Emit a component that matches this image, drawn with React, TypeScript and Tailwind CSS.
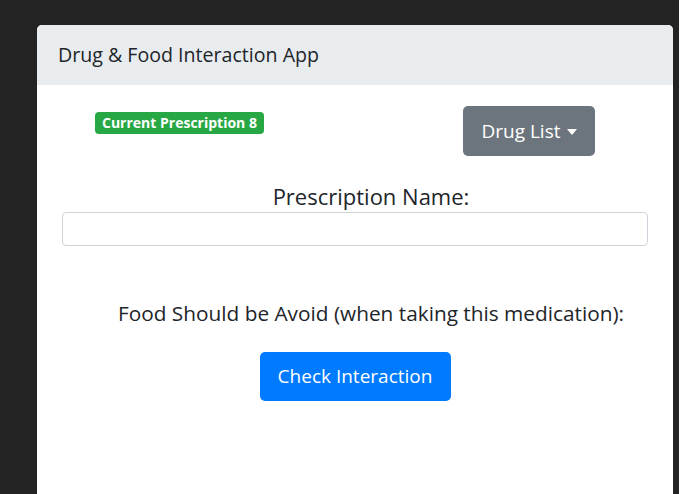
const font = { fontFamily: '"Segoe UI", "Open Sans", "Noto Sans", sans-serif' };

export default function App() {
  return (
    <div className="flex h-[494px] w-[695px] overflow-hidden bg-white text-[#212529]" style={font}>
      <div className="w-[679px] shrink-0 bg-[#232323] pl-[37px] pr-[6px] pt-[25px]">
        <div className="h-full rounded-t-[5px] bg-white">
          {/* header */}
          <div className="flex h-[60px] items-center rounded-t-[5px] bg-[#e9ecef] px-[21px] text-[19.6px]">
            Drug &amp; Food Interaction App
          </div>

          <div className="px-[25px]">
            {/* top row */}
            <div className="mt-[21px] flex items-start">
              <span className="ml-[33px] mt-[6px] rounded-[4px] bg-[#28a745] px-[7px] py-[2px] text-[14px] font-bold leading-[18px] text-white">
                Current Prescription 8
              </span>
              <button className="ml-auto mr-[53px] flex h-[50px] w-[132px] items-center justify-center gap-[6px] rounded-[5px] bg-[#6c757d] text-[19px] text-white">
                Drug List
                <span className="mt-[2px] h-0 w-0 border-x-[5px] border-t-[6px] border-x-transparent border-t-white" />
              </button>
            </div>

            {/* prescription name */}
            <div className="mt-[27px] pl-[32px] text-center text-[22px] leading-[27px]">Prescription Name:</div>
            <input
              className="mt-[2px] block h-[34px] w-full rounded-[4px] border border-[#ced4da] bg-white px-3 outline-none"
              type="text"
            />

            {/* food */}
            <div className="mt-[54px] pl-[32px] text-center text-[20.8px] leading-[27px]">
              Food Should be Avoid (when taking this medication):
            </div>
            <div className="mt-[25px] flex justify-center">
              <button className="h-[49px] w-[191px] rounded-[5px] bg-[#007bff] text-[19px] text-white">
                Check Interaction
              </button>
            </div>
          </div>
        </div>
      </div>
    </div>
  );
}
